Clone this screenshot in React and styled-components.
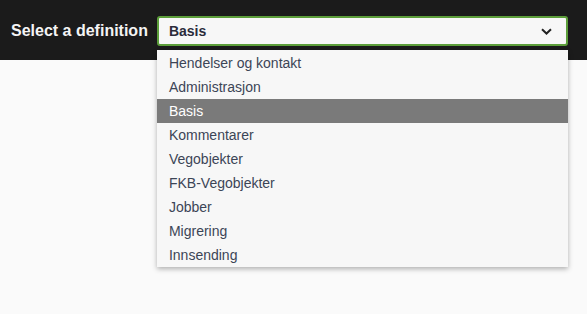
import React from 'react';
import styled, {createGlobalStyle} from 'styled-components';

const GlobalStyle = createGlobalStyle`
  html, body {
    margin: 0;
    padding: 0;
    background: #fafafa;
    font-family: "Liberation Sans", Arial, sans-serif;
  }
`

const Page = styled.div`
  width: 587px;
  height: 314px;
  background: #fafafa;
  overflow: hidden;
`

const Header = styled.div`
  height: 60px;
  background: #1b1b1b;
  display: flex;
  align-items: flex-start;
  padding: 16px 19px 0 11px;
  box-sizing: border-box;
  gap: 9px;
`

const Label = styled.div`
  color: #f4f4f4;
  font-weight: bold;
  font-size: 16px;
  line-height: 29px;
  white-space: nowrap;
`

const SelectWrap = styled.div`
  position: relative;
  width: 411px;
`

const SelectBox = styled.div`
  height: 30px;
  box-sizing: border-box;
  border: 2px solid #5c9e3a;
  border-radius: 3px;
  background: #f7f7f7;
  display: flex;
  align-items: center;
  justify-content: space-between;
  padding: 0 14px 0 10px;
  color: #2b2b3a;
  font-weight: bold;
  font-size: 14px;
`

const Menu = styled.ul`
  position: absolute;
  top: 34px;
  left: 0;
  width: 411px;
  margin: 0;
  padding: 1px 0 0;
  list-style: none;
  background: #f7f7f7;
  box-shadow: 0 2px 5px rgba(0, 0, 0, 0.3);
`

const Item = styled.li`
  height: 24px;
  line-height: 24px;
  padding: 0 12px;
  font-size: 14px;
  color: ${p => p.active ? '#ffffff' : '#3c4556'};
  background: ${p => p.active ? '#7a7a7a' : 'transparent'};
`

const items = ['Hendelser og kontakt', 'Administrasjon', 'Basis', 'Kommentarer', 'Vegobjekter', 'FKB-Vegobjekter', 'Jobber', 'Migrering', 'Innsending']

const App = () => {
  return (
    <Page>
      <GlobalStyle/>
      <Header>
        <Label>Select a definition</Label>
        <SelectWrap>
          <SelectBox>
            <span>Basis</span>
            <svg width="11" height="7" viewBox="0 0 11 7">
              <path d="M1 1.2 L5.5 5.5 L10 1.2" fill="none" stroke="#222" strokeWidth="2"/>
            </svg>
          </SelectBox>
          <Menu>
            {items.map(name => (
              <Item key={name} active={name === 'Basis'}>{name}</Item>
            ))}
          </Menu>
        </SelectWrap>
      </Header>
    </Page>
  )
}

export default App
